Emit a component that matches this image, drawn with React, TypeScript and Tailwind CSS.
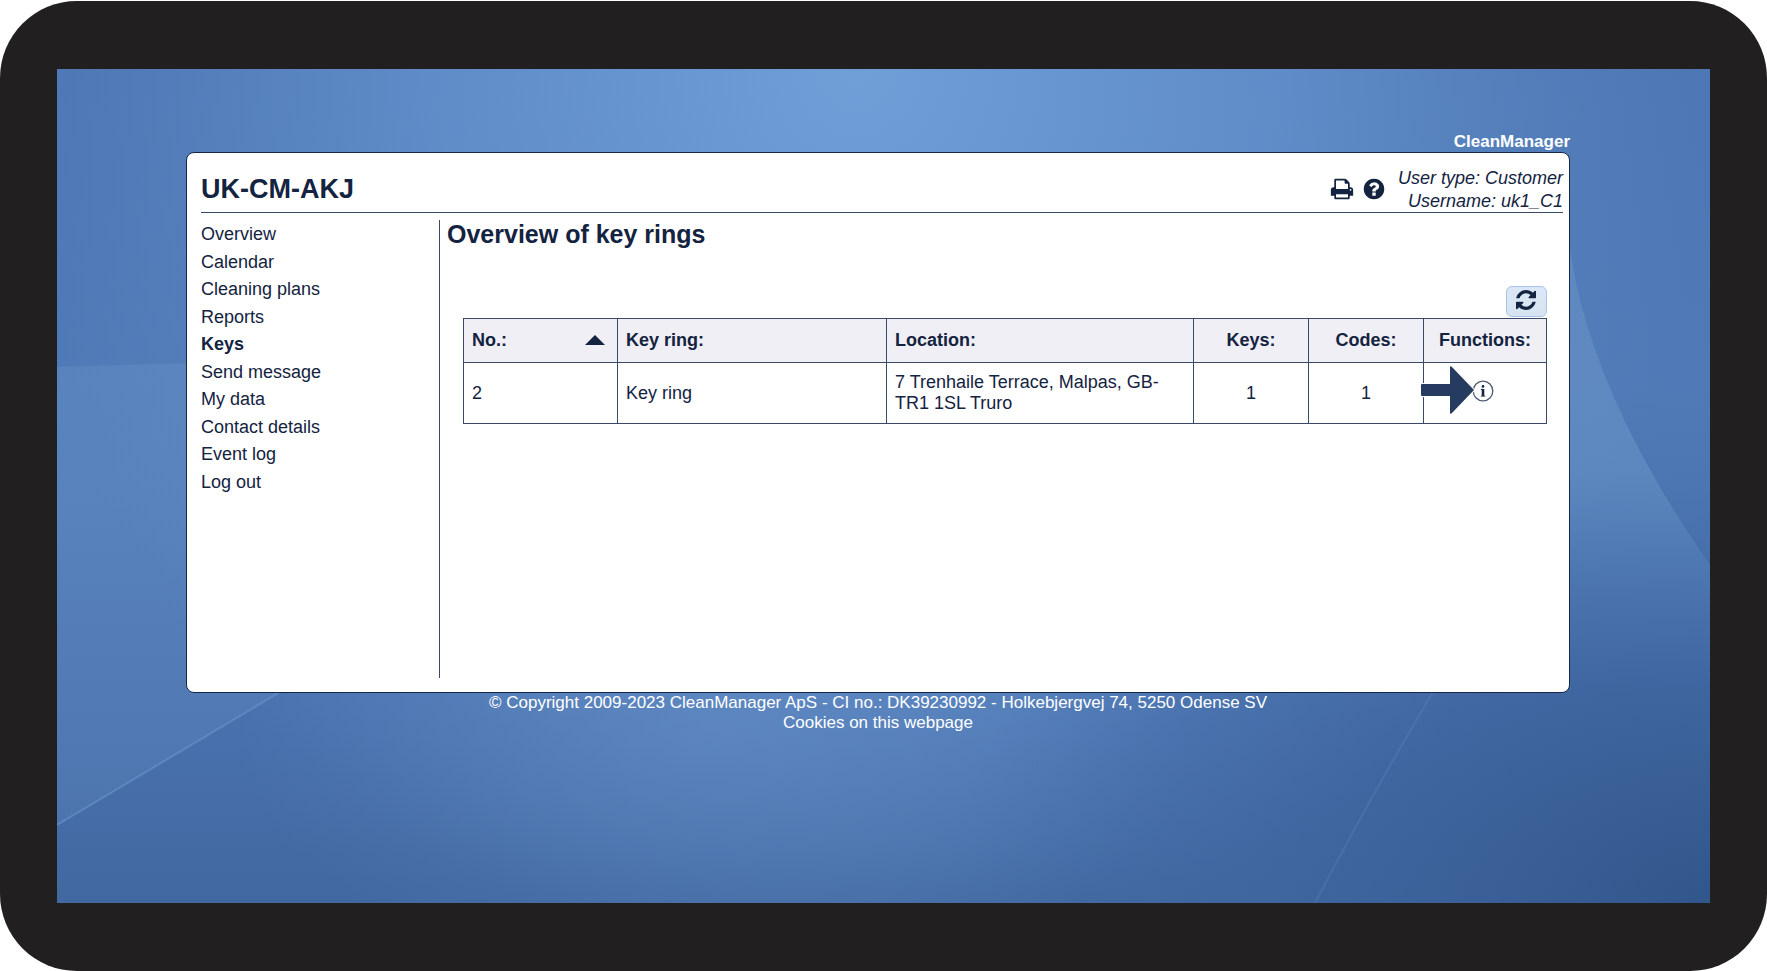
import { useState } from "react";

type KeyRing = {
  no: number;
  name: string;
  location: string;
  keys: number;
  codes: number;
};

const menu = [
  "Overview",
  "Calendar",
  "Cleaning plans",
  "Reports",
  "Keys",
  "Send message",
  "My data",
  "Contact details",
  "Event log",
  "Log out",
];

const keyRings: KeyRing[] = [
  { no: 2, name: "Key ring", location: "7 Trenhaile Terrace, Malpas, GB-TR1 1SL Truro", keys: 1, codes: 1 },
];

function PrintIcon() {
  return (
    <svg className="w-6 h-6" viewBox="0 0 1792 1792" fill="currentColor" aria-hidden="true">
      <path d="M448 1536h896v-256h-896v256zm0-640h896v-384h-160q-40 0-68-28t-28-68v-160h-640v640zm1152 64q0-26-19-45t-45-19-45 19-19 45 19 45 45 19 45-19 19-45zm128 0v416q0 13-9.500 22.500t-22.500 9.500h-224v160q0 40-28 68t-68 28h-960q-40 0-68-28t-28-68v-160h-224q-13 0-22.500-9.500t-9.500-22.500v-416q0-79 56.500-135.500t135.500-56.500h64v-544q0-40 28-68t68-28h672q40 0 88 20t76 48l152 152q28 28 48 76t20 88v256h64q79 0 135.500 56.500t56.500 135.500z" />
    </svg>
  );
}

function HelpIcon() {
  return (
    <svg className="w-6 h-6" viewBox="0 0 1792 1792" fill="currentColor" aria-hidden="true">
      <path d="M1024 1376v-192q0-14-9-23t-23-9h-192q-14 0-23 9t-9 23v192q0 14 9 23t23 9h192q14 0 23-9t9-23zm256-672q0-88-55.500-163t-138.500-116-170-41q-243 0-371 213-15 24 8 42l132 100q7 6 19 6 16 0 25-12 53-68 86-92 34-24 86-24 48 0 85.500 26t37.500 59q0 38-20 61t-68 45q-63 28-115.500 86.500t-52.500 125.500v36q0 14 9 23t23 9h192q14 0 23-9t9-23q0-19 21.500-49.500t54.500-49.500q32-18 49-28.500t46-35 44.500-48 28-60.500 12.500-81zm384 192q0 209-103 385.500t-279.500 279.500-385.500 103-385.500-103-279.500-279.500-103-385.500 103-385.500 279.500-279.500 385.500-103 385.500 103 279.500 279.500 103 385.500z" />
    </svg>
  );
}

function RefreshIcon() {
  return (
    <svg className="w-5 h-5" viewBox="0 0 1536 1536" fill="currentColor" aria-hidden="true">
      <path d="M1511 928q0 5-1 7-64 268-268 434.500t-478 166.500q-146 0-282.500-55t-243.500-157l-129 129q-19 19-45 19t-45-19-19-45v-448q0-26 19-45t45-19h448q26 0 45 19t19 45-19 45l-137 137q71 66 161 102t187 36q134 0 250-65t186-179q11-17 53-117 8-23 30-23h192q13 0 22.500 9.500t9.500 22.500zm25-800v448q0 26-19 45t-45 19h-448q-26 0-45-19t-19-45 19-45l138-138q-148-137-349-137-134 0-250 65t-186 179q-11 17-53 117-8 23-30 23h-199q-13 0-22.500-9.500t-9.500-22.500v-7q65-268 270-434.500t480-166.500q146 0 284 55.500t245 156.500l130-129q19-19 45-19t45 19 19 45z" />
    </svg>
  );
}

function InfoIcon() {
  return (
    <svg className="w-[22px] h-[22px]" viewBox="0 0 22 22" aria-hidden="true">
      <circle cx="11" cy="11" r="9.800" fill="#fff" stroke="#4b5a72" strokeWidth="1.300" />
      <circle cx="11" cy="6.400" r="1.300" fill="currentColor" />
      <path d="M9.300 9h3v7h-2.600v-6.200H9.300z" fill="currentColor" />
      <path d="M8.800 9.300h2M8.800 16.200h4.600" stroke="currentColor" strokeWidth="0.800" />
    </svg>
  );
}

function Wallpaper() {
  return (
    <svg className="absolute inset-0 w-full h-full" viewBox="0 0 1653 834" preserveAspectRatio="none" aria-hidden="true">
      <defs>
        <linearGradient id="base" x1="0" y1="0" x2="0" y2="1">
          <stop offset="0" stopColor="#4d77b4" />
          <stop offset="0.500" stopColor="#4f7bb7" />
          <stop offset="0.800" stopColor="#4870ac" />
          <stop offset="1" stopColor="#41689f" />
        </linearGradient>
        <radialGradient id="glow" gradientUnits="userSpaceOnUse" cx="0" cy="0" r="1" gradientTransform="translate(800 0) scale(860 900)">
          <stop offset="0" stopColor="#709fd8" />
          <stop offset="0.500" stopColor="#6391cc" stopOpacity="0.800" />
          <stop offset="1" stopColor="#5a85c0" stopOpacity="0" />
        </radialGradient>
        <radialGradient id="low" gradientUnits="userSpaceOnUse" cx="0" cy="0" r="1" gradientTransform="translate(660 660) scale(480 260)">
          <stop offset="0" stopColor="#6a93ca" stopOpacity="0.450" />
          <stop offset="1" stopColor="#6a93ca" stopOpacity="0" />
        </radialGradient>
        <radialGradient id="shade" gradientUnits="userSpaceOnUse" cx="0" cy="0" r="1" gradientTransform="translate(1653 834) scale(760 520)">
          <stop offset="0" stopColor="#31568b" />
          <stop offset="0.500" stopColor="#3c629b" stopOpacity="0.650" />
          <stop offset="1" stopColor="#426aa6" stopOpacity="0" />
        </radialGradient>
        <linearGradient id="left" x1="0" y1="0" x2="0" y2="1">
          <stop offset="0" stopColor="#6f98cb" stopOpacity="0.300" />
          <stop offset="1" stopColor="#6f98cb" stopOpacity="0.200" />
        </linearGradient>
        <linearGradient id="right" x1="0" y1="0" x2="0" y2="1">
          <stop offset="0" stopColor="#8aa8d8" stopOpacity="0.250" />
          <stop offset="0.500" stopColor="#79a6d4" stopOpacity="0.350" />
          <stop offset="1" stopColor="#5f8fc6" stopOpacity="0" />
        </linearGradient>
      </defs>
      <rect width="1653" height="834" fill="url(#base)" />
      <rect width="1653" height="834" fill="url(#glow)" />
      <rect width="1653" height="834" fill="url(#low)" />
      <rect width="1653" height="834" fill="url(#shade)" />
      <path d="M0 298L130 294H700V560H328L223 623L0 756Z" fill="url(#left)" />
      <path d="M0 756L223 623" stroke="#6f9bd0" strokeOpacity="0.500" strokeWidth="2" />
      <path d="M1440 180H1513C1525 265 1565 370 1653 496V623H1440Z" fill="url(#right)" />
      <path d="M1376 623Q1315 725 1258 834" fill="none" stroke="#6f9bd0" strokeOpacity="0.200" strokeWidth="2" />
    </svg>
  );
}

export default function App() {
  const [active, setActive] = useState("Keys");

  const cell = "border border-[#3a4a66] px-2";

  return (
    <div className="min-h-screen flex flex-col bg-white pt-px font-['Liberation_Sans',Arial,sans-serif] text-[#14233f]">
      <div className="grow flex flex-col rounded-[77px] bg-[#221f20] px-[57px] py-[68px]">
        <div className="relative grow flex flex-col overflow-hidden pl-[129px] pr-[140px] pt-[62px]">
          <Wallpaper />

          <div className="relative text-right text-[17px] leading-[21px] font-bold text-white">CleanManager</div>

          <div className="relative min-h-[541px] flex flex-col rounded-lg border border-[#14274a] bg-white pl-3.5 pr-1.5 pb-3.5">
            <header className="h-[60px] shrink-0 flex items-center justify-between border-b border-[#3a4a66] pt-3">
              <h1 className="text-[27px] leading-8 font-bold">UK-CM-AKJ</h1>
              <div className="flex items-center gap-2">
                <button type="button" aria-label="Print">
                  <PrintIcon />
                </button>
                <button type="button" aria-label="Help">
                  <HelpIcon />
                </button>
                <div className="pl-1 pt-0.5 text-right text-lg leading-[23px] italic">
                  <p>User type: Customer</p>
                  <p>Username: uk1_C1</p>
                </div>
              </div>
            </header>

            <div className="grow flex pt-[7px]">
              <nav className="w-[239px] shrink-0 border-r border-[#3a4a66] pt-px">
                <ul className="grid h-[275px] grid-rows-10 items-center">
                  {menu.map((item) => (
                    <li key={item} className="text-lg leading-[27px]">
                      <a
                        href="#"
                        onClick={() => setActive(item)}
                        className={item === active ? "font-bold" : "hover:underline"}
                      >
                        {item}
                      </a>
                    </li>
                  ))}
                </ul>
              </nav>

              <main className="grow pl-[7px]">
                <h2 className="text-[25px] leading-7 font-bold">Overview of key rings</h2>

                <div className="pl-4 pr-4 pt-[38px]">
                  <div className="flex justify-end pb-px">
                    <button
                      type="button"
                      aria-label="Refresh"
                      className="w-[41px] h-[31px] flex items-center justify-center rounded-md border border-[#a9c4ea] bg-linear-to-b from-[#dbe7f6] to-[#d6e4f1] pr-0.5 pb-1"
                    >
                      <RefreshIcon />
                    </button>
                  </div>

                  <table className="w-full table-fixed border-collapse text-left text-lg leading-[21px]">
                    <colgroup>
                      <col className="w-[154px]" />
                      <col className="w-[269px]" />
                      <col />
                      <col className="w-[115px]" />
                      <col className="w-[115px]" />
                      <col className="w-[123px]" />
                    </colgroup>
                    <thead>
                      <tr className="h-[44px] bg-[#f0eff5]">
                        <th className={cell}>
                          <div className="flex items-center justify-between pr-1 pb-px">
                            No.:
                            <svg className="w-5 h-2.5" viewBox="0 0 20 10" fill="currentColor" aria-hidden="true">
                              <path d="M10 0L20 10H0Z" />
                            </svg>
                          </div>
                        </th>
                        <th className={cell}>Key ring:</th>
                        <th className={cell}>Location:</th>
                        <th className={`${cell} text-center`}>Keys:</th>
                        <th className={`${cell} text-center`}>Codes:</th>
                        <th className={`${cell} text-center`}>Functions:</th>
                      </tr>
                    </thead>
                    <tbody>
                      {keyRings.map((ring) => (
                        <tr key={ring.no} className="h-[61px]">
                          <td className={cell}>{ring.no}</td>
                          <td className={cell}>{ring.name}</td>
                          <td className={cell}>{ring.location}</td>
                          <td className={`${cell} text-center`}>{ring.keys}</td>
                          <td className={`${cell} text-center`}>{ring.codes}</td>
                          <td className={cell}>
                            <div className="relative flex justify-center pr-1 pb-1">
                              <button type="button" aria-label="Show key ring">
                                <InfoIcon />
                              </button>
                              {/* pointer to the info button */}
                              <svg
                                className="absolute right-[calc(50%+10px)] -top-4 w-14 h-[52px]"
                                viewBox="0 0 56 52"
                                aria-hidden="true"
                              >
                                <path
                                  d="M3 20H31V3Q31 2 32.500 2.500L55 26L32.500 49.500Q31 50 31 49V32H3Q2 32 2 31V21Q2 20 3 20Z"
                                  fill="#253c60"
                                  stroke="#fff"
                                  strokeWidth="2"
                                  paintOrder="stroke"
                                />
                              </svg>
                            </div>
                          </td>
                        </tr>
                      ))}
                    </tbody>
                  </table>
                </div>
              </main>
            </div>
          </div>

          <footer className="relative text-center text-[17px] leading-5 text-white">
            <p>© Copyright 2009-2023 CleanManager ApS - CI no.: DK39230992 - Holkebjergvej 74, 5250 Odense SV</p>
            <a href="#" className="hover:underline">
              Cookies on this webpage
            </a>
          </footer>
        </div>
      </div>
    </div>
  );
}
